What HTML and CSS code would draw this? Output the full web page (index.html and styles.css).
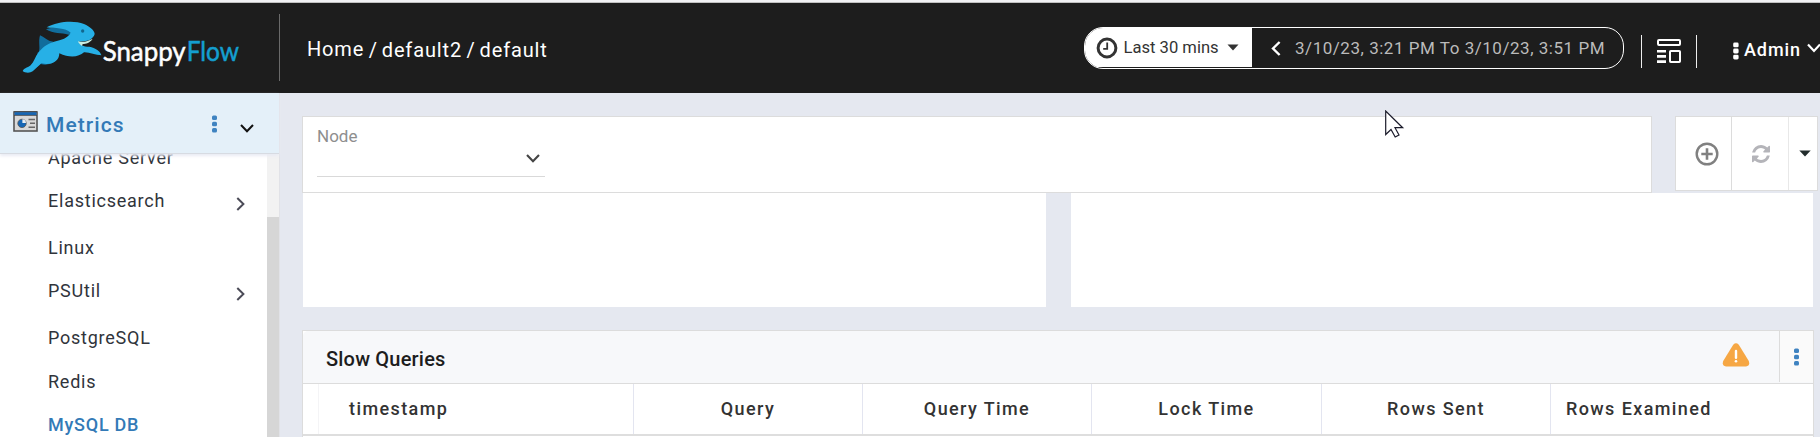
FILE: index.html
```html
<!DOCTYPE html>
<html lang="en">
<head>
<meta charset="utf-8">
<title>SnappyFlow</title>
<link rel="stylesheet" href="styles.css">
</head>
<body>
<div class="app">
  <header class="topbar">
    <svg class="logo" viewBox="0 9 837 270" role="img" aria-label="SnappyFlow">
      <path fill="#116d9c" d="M138 88C160 80 198 78 222 84L228 100L206 104C184 97 160 103 138 88ZM120 106C132 110 142 124 160 125L140 148L116 156C122 146 114 126 120 106ZM114 156L140 148L176 160C178 182 150 200 122 192L98 212L90 200L104 182Z"/>
      <path fill="#27b0e6" d="M140 82C172 64 222 60 252 72C270 80 284 92 284 102C280 116 266 124 248 124L236 125C240 134 250 140 268 140C286 144 302 154 304 166C286 166 268 156 252 157C236 172 208 174 178 160C178 184 154 198 124 190L98 214C90 220 74 219 68 213C72 204 84 203 92 196C102 186 106 170 114 160C126 142 140 132 162 125C186 118 202 116 212 98C196 82 166 86 140 82Z"/>
      <path fill="#c9ede2" d="M234 124C250 128 264 124 278 116C270 128 258 132 248 132L246 138C240 134 236 130 234 124Z"/>
      <circle cx="248" cy="93" r="5" fill="#11678f"/>
      <text x="308" y="182" class="logo-name" textLength="249" lengthAdjust="spacingAndGlyphs">Snappy</text>
      <text x="560" y="182" class="logo-name logo-flow" textLength="157" lengthAdjust="spacingAndGlyphs">Flow</text>
    </svg>
    <nav class="crumbs"><a class="crumb-home">Home</a><span>/</span><a>default2</a><span>/</span><a>default</a></nav>
    <div class="timepicker">
      <button class="range">
        <svg width="22" height="22" viewBox="0 0 22 22" fill="none" stroke="#333"><circle cx="11" cy="11" r="8.9" stroke-width="3"/><path d="M11.2 5.6v6.2H7.2" stroke-width="1.8"/></svg>
        <span class="range-label">Last 30 mins</span>
        <svg width="12" height="7" viewBox="0 0 12 7"><path d="M.5 .5h11L6 6.5z" fill="#333"/></svg>
      </button>
      <div class="period">
        <svg width="10" height="15" viewBox="0 0 10 15" fill="none" stroke="#fff" stroke-width="2.4"><path d="M8.6 1L2 7.5L8.6 14"/></svg>
        <span>3/10/23, 3:21 PM To 3/10/23, 3:51 PM</span>
      </div>
    </div>
    <div class="dash">
      <svg width="24" height="24" viewBox="0 0 24 24" fill="none" stroke="#fff"><rect x="1" y="1" width="22" height="5" rx="1" stroke-width="2"/><rect x="13" y="12" width="10" height="11" rx=".8" stroke-width="2"/><path d="M0 12.2h9M0 17.4h9M0 22.6h9" stroke-width="2.6"/></svg>
    </div>
    <div class="user">
      <svg width="6" height="18" viewBox="0 0 6 18" fill="#fff"><rect x=".2" y=".5" width="5.4" height="4.8" rx="1.4"/><rect x=".2" y="6.6" width="5.4" height="4.8" rx="1.4"/><rect x=".2" y="12.7" width="5.4" height="4.8" rx="1.4"/></svg>
      <span>Admin</span>
      <svg width="14" height="10" viewBox="0 0 14 10" fill="none" stroke="#fff" stroke-width="2.2"><path d="M1 1.5L7 8L13 1.5"/></svg>
    </div>
  </header>
  <div class="body">
    <aside class="sidebar">
      <div class="side-head">
        <svg width="25" height="21" viewBox="0 0 25 21"><rect x="1" y="1" width="23" height="19" fill="#d9d9d9" stroke="#555" stroke-width="1.6"/><path d="M1.5 1.2h22v3h-22z" fill="#1767b5"/><path d="M1 .6h23M1 4.4h23" stroke="#444" stroke-width=".8"/><circle cx="9" cy="12.4" r="4.2" fill="#1767b5" stroke="#555" stroke-width=".8"/><path d="M9.4 12V8.2A4 4 0 0 1 13 12z" fill="#e8eef4"/><path d="M15.5 8.5H22M17 12.3h5M15.5 16.2H22" stroke="#666" stroke-width="1.4"/></svg>
        <span class="side-title">Metrics</span>
        <svg class="dots" width="5" height="18" viewBox="0 0 5 18" fill="#3f83c1"><rect y=".5" width="5" height="4.4" rx="1.5"/><rect y="6.8" width="5" height="4.4" rx="1.5"/><rect y="13" width="5" height="4.4" rx="1.5"/></svg>
        <svg class="chev" width="14" height="9" viewBox="0 0 14 9" fill="none" stroke="#111" stroke-width="2"><path d="M1 1L7 7.3L13 1"/></svg>
      </div>
      <div class="side-scroll">
        <ul class="menu">
          <li class="cut">Apache Server</li>
          <li class="wide">Elasticsearch<svg width="9" height="14" viewBox="0 0 9 14"><path d="M1.3 1L7.4 7L1.3 13"/></svg></li>
          <li>Linux</li>
          <li class="wide">PSUtil<svg width="9" height="14" viewBox="0 0 9 14"><path d="M1.3 1L7.4 7L1.3 13"/></svg></li>
          <li>PostgreSQL</li>
          <li>Redis</li>
          <li class="active">MySQL DB</li>
        </ul>
        <div class="track"><div class="thumb"></div></div>
      </div>
    </aside>
    <main class="main">
      <div class="tools">
        <div class="filters">
          <div class="field">
            <label>Node</label>
            <svg width="14" height="9" viewBox="0 0 14 9" fill="none" stroke="#444" stroke-width="2.1"><path d="M1 1L7 7.2L13 1"/></svg>
          </div>
        </div>
        <div class="actions">
          <button class="act-add"><svg width="24" height="24" viewBox="0 0 24 24" fill="none" stroke="#808080"><circle cx="12" cy="12" r="10.3" stroke-width="2.4"/><path d="M12 6.3v11.4M6.3 12h11.4" stroke-width="2.6"/></svg></button>
          <button class="act-refresh"><svg width="18" height="18" viewBox="0 0 1536 1536" fill="#b4b4b9"><path d="M1511 928q0 5-1 7-64 268-268 434.500T764 1536q-146 0-282.500-55T238 1324l-129 129q-19 19-45 19t-45-19-19-45V960q0-26 19-45t45-19h448q26 0 45 19t19 45-19 45l-137 137q71 66 161 102t187 36q134 0 250-65t186-179q11-17 53-117 8-23 30-23h192q13 0 22.500 9.500t9.500 22.500zm25-800v448q0 26-19 45t-45 19h-448q-26 0-45-19t-19-45 19-45l138-138Q969 256 768 256q-134 0-250 65T332 500q-11 17-53 117-8 23-30 23H50q-13 0-22.500-9.500T18 608v-7q65-268 270-434.500T768 0q146 0 284 55.500T1297 212l130-129q19-19 45-19t45 19 19 45z"/></svg></button>
          <button class="act-more"><svg width="12" height="7" viewBox="0 0 12 7"><path d="M.3 .5h11.4L6 6.5z" fill="#222c2c"/></svg></button>
        </div>
      </div>
      <div class="charts"><section></section><section></section></div>
      <section class="panel">
        <div class="panel-head">
          <h2>Slow Queries</h2>
          <svg class="warn" width="28" height="24" viewBox="0 0 28 24"><path d="M11.2 1.7Q14 -1.1 16.8 1.7L26.8 18Q28.3 23 24 23.500H4Q-.3 23 1.200 18Z" fill="#f6a744"/><path d="M14 8v6.800" stroke="#fff" stroke-width="2.400" stroke-linecap="round"/><circle cx="14" cy="18.200" r="1.300" fill="#fff"/></svg>
          <div class="panel-menu"><svg width="5" height="18" viewBox="0 0 5 18" fill="#3f83c1"><rect y=".5" width="5" height="4.400" rx="1.500"/><rect y="6.800" width="5" height="4.400" rx="1.500"/><rect y="13" width="5" height="4.400" rx="1.500"/></svg></div>
        </div>
        <div class="thead">
          <div class="gutter"></div>
          <div class="first">timestamp</div>
          <div>Query</div>
          <div>Query Time</div>
          <div>Lock Time</div>
          <div>Rows Sent</div>
          <div class="last">Rows Examined</div>
        </div>
      </section>
    </main>
  </div>
  <svg class="cursor" width="20" height="29" viewBox="0 0 20 29"><path d="M.7 1v23.500l5.300-5 4.200 7.500 3.800-2-4-7.300h7.700z" fill="#fff" stroke="#1b1b2b" stroke-width="1.200"/></svg>
</div>
</body>
</html>
```
FILE: styles.css
```css
* { box-sizing: border-box; }
body { margin: 0; font-family: Roboto, sans-serif; background: #e5e8f0; }
button { border: 0; padding: 0; background: #fff; font: inherit; }
svg { display: block; flex: none; }

.app { position: relative; height: 437px; overflow: hidden; display: flex; flex-direction: column; }

.topbar { flex: none; height: 93px; border-top: 2px solid #f1f1f3; box-shadow: inset 0 1px #c0c0c0; background: #1d1d1d; display: flex; align-items: flex-start; color: #fff; }
.logo { width: 279px; height: 90px; margin-top: 1px; }
.logo-name { font: 400 79px Lato, sans-serif; fill: #fff; stroke: #fff; stroke-width: 1.5px; }
.logo-flow { fill: #149fd0; stroke: #149fd0; }
.crumbs { flex: 1; height: 67px; margin-top: 12px; border-left: 1px solid #6a6a6a; padding: 23px 0 0 27px; display: flex; gap: 4.500px; font-size: 20px; line-height: 26px; letter-spacing: .85px; }
.crumb-home { margin-top: -1px; }
.crumbs span { letter-spacing: .3px; }

.timepicker { width: 540px; height: 42px; margin-top: 25px; border: 1px solid #fff; border-radius: 19px; overflow: hidden; display: flex; }
.range { width: 167px; height: 39px; padding-left: 10.500px; display: flex; align-items: center; color: #333; }
.range-label { margin: 0 9px 0 6px; font-size: 16.600px; width: 94px; white-space: nowrap; }
.period { flex: 1; display: flex; align-items: center; padding-left: 19px; font-size: 17px; letter-spacing: .53px; color: #bbb; white-space: nowrap; }
.period span { margin-left: 14px; }
.dash { width: 56px; height: 33px; margin: 33px 0 0 17px; border: solid #eee; border-width: 0 1px; display: flex; align-items: flex-start; padding: 4px 0 0 15px; }
.user { width: 123px; padding: 37px 0 0 36px; display: flex; align-items: flex-start; overflow: hidden; font-weight: 500; font-size: 18px; line-height: 22px; letter-spacing: .9px; }
.user svg:first-child { margin-top: 3px; }
.user span { margin-left: 5px; width: 58px; margin-right: 6px; }
.user svg:last-child { margin-top: 4px; }

.body { flex: 1; min-height: 0; display: flex; }
.sidebar { width: 280px; flex: none; display: flex; flex-direction: column; background: #fff; border-right: 1px solid #e1e2e7; }
.side-head { height: 61px; flex: none; background: #e4f0f9; border-bottom: 1px solid #d7dbe2; box-shadow: 0 2px 3px #e9ebf4; z-index: 1; display: flex; align-items: flex-start; padding: 18px 0 0 13px; }
.side-title { width: 166px; margin: 1px 0 0 8px; color: #337ab7; font-weight: 500; font-size: 21px; line-height: 26px; letter-spacing: 1.050px; }
.dots { margin-top: 4px; }
.chev { margin: 13px 0 0 23px; }
.side-scroll { flex: 1; min-height: 0; overflow: hidden; display: flex; }
.menu { flex: 1; margin: 0; padding: 0 22px 0 48px; list-style: none; font-size: 18px; line-height: 24px; letter-spacing: .76px; color: #30343b; }
.menu li { height: 43.500px; padding-top: 9px; display: flex; align-items: flex-start; justify-content: space-between; }
.menu .cut { height: 31px; padding: 0; margin-top: -8px; white-space: nowrap; }
.menu .wide { height: 47px; padding-top: 12px; }
.menu .wide + li { padding-top: 12px; height: 43px; }
.menu .wide svg { fill: none; stroke: #4c4c58; stroke-width: 2; margin-top: 8px; }
.menu .wide + li + li:not(.wide) { padding-top: 13px; }
.menu .wide + li + .wide { padding-top: 12px; }
.menu .active { color: #337ab7; font-weight: 500; padding-top: 12px; }
.track { width: 12px; background: #f2f2f2; padding-top: 63px; display: flex; }
.thumb { flex: 1; background: #d6d6d6; }

.main { flex: 1; min-width: 0; padding: 23px 0 0 22px; }
.tools { display: flex; align-items: flex-start; }
.filters { width: 1350px; height: 77px; background: #fff; border: 1px solid #dcdcdc; padding-left: 14px; }
.field { width: 228px; height: 60px; border-bottom: 1px solid #d9d9d9; padding: 9px 5px 0 0; display: flex; align-items: flex-start; justify-content: space-between; }
.field label { font-size: 17px; line-height: 20px; color: #8e8e8e; }
.field svg { margin-top: 28px; }
.actions { width: 143px; height: 75px; margin-left: 23px; border: 1px solid #dcdcdc; background: #fff; display: flex; }
.actions button { display: flex; align-items: center; justify-content: center; }
.act-add { width: 56px; padding-left: 6px; border-right: 1px solid #dcdcdc; }
.act-refresh { width: 57px; padding-left: 1px; border-right: 1px solid #e8e8e8; }
.act-more { flex: 1; padding-left: 3px; }
.charts { width: 1510px; margin-left: 1px; height: 114px; display: grid; grid-template-columns: 743px 742px; gap: 25px; }
.charts section { background: #fff; }
.panel { width: 1512px; height: 140px; margin-top: 23px; border: 1px solid #dcdcdc; background: #fff; }
.panel-head { height: 53px; border-bottom: 1px solid #dcdcdc; border-top-left-radius: 5px; background: #f7f8fa; display: flex; }
.panel-head h2 { flex: 1; margin: 0; padding: 15px 0 0 23px; font-weight: 500; font-size: 20px; line-height: 26px; letter-spacing: .2px; color: #1d1d1d; }
.warn { margin: 12px 29px 0 0; }
.panel-menu { width: 34px; height: 51px; border-left: 1px solid #dcdcdc; background: #fafafa; padding: 17px 0 0 14px; }
.thead { height: 52px; display: grid; grid-template-columns: 16px 315px 229px 229px 230px 229px 1fr; border-bottom: 2px solid #dedede; font-weight: 500; font-size: 18px; line-height: 50px; letter-spacing: 1.400px; color: #333; }
.thead div { border-right: 1px solid #e3e5f0; text-align: center; }
.thead .gutter { border-right-color: #f4f4f6; }
.thead .first { text-align: left; padding-left: 30px; }
.thead .last { border: 0; text-align: left; padding-left: 15px; }

.cursor { position: absolute; left: 1385px; top: 110px; }
```
